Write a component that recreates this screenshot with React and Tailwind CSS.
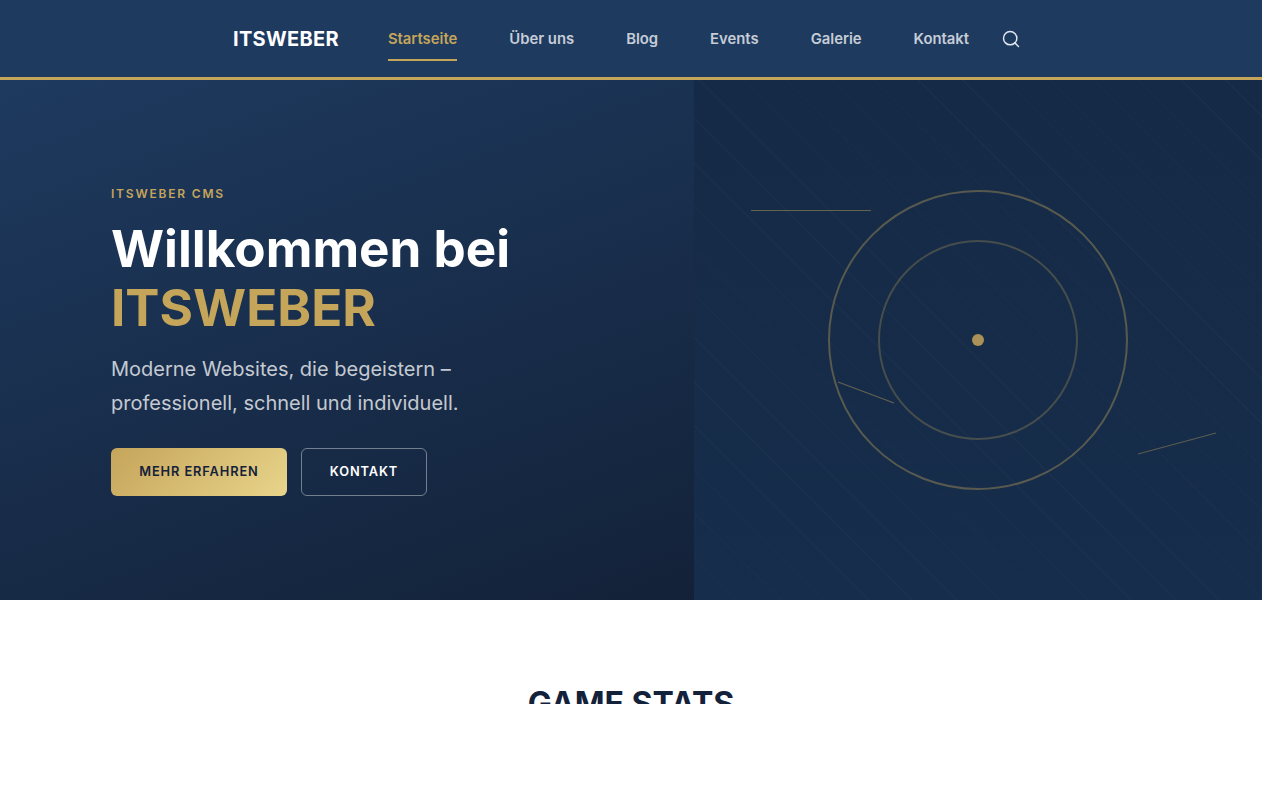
import React from 'react';
import { Search } from 'lucide-react';

const links = ['Startseite', 'Über uns', 'Blog', 'Events', 'Galerie', 'Kontakt'];

function Header() {
  return (
    <header className="h-20 bg-[#1e3a5f] border-b-[3px] border-[#c5a55a] flex items-center pl-[233px]">
      <a className="text-[20px] font-bold text-white tracking-[0.3px] mr-[49px]">ITSWEBER</a>
      <nav className="flex items-center gap-[52px] h-full">
        {links.map((link, i) => (
          <a
            key={link}
            className={`relative top-px text-[14.84px] font-semibold ${i === 0 ? 'text-[#c5a55a]' : 'text-white/75'}`}
          >
            {link}
            {i === 0 && <span className="absolute left-0 right-0 -bottom-[10px] h-0.5 bg-[#c5a55a]" />}
          </a>
        ))}
      </nav>
      <Search className="ml-[32px] text-[#e2e8f0]" size={20} strokeWidth={1.75} />
    </header>
  );
}

function HeroGraphic() {
  return (
    <div className="relative w-[45%] bg-[repeating-linear-gradient(45deg,transparent,transparent_30px,rgba(255,255,255,0.02)_30px,rgba(255,255,255,0.02)_31px),linear-gradient(180deg,#152a46,#162d4b)]">
      <svg className="absolute inset-0" width="568" height="520" viewBox="694 80 568 520" fill="none">
        <circle cx="978" cy="340" r="149" stroke="#c5a55a" strokeOpacity="0.38" strokeWidth="2" />
        <circle cx="978" cy="340" r="99" stroke="#c5a55a" strokeOpacity="0.28" strokeWidth="2" />
        <circle cx="978" cy="340" r="6" fill="#ab9158" />
        <line x1="751" y1="210.5" x2="871" y2="210.5" stroke="#c5a55a" strokeOpacity="0.45" />
        <line x1="838" y1="382" x2="894" y2="403" stroke="#c5a55a" strokeOpacity="0.45" strokeWidth="1.1" />
        <line x1="1138" y1="454" x2="1216" y2="433" stroke="#c5a55a" strokeOpacity="0.4" strokeWidth="1.1" />
      </svg>
    </div>
  );
}

function Hero() {
  return (
    <section className="flex h-[520px] bg-[linear-gradient(160deg,#1e3a5f_0%,#101b2e_100%)]">
      <div className="w-[55%] pl-[111px] pt-[106px]">
        <p className="text-[12px] leading-4 font-semibold uppercase tracking-[1.8px] text-[#c5a55a]">ITSWEBER CMS</p>
        <h1 className="mt-[17px] text-[51.2px] leading-[59px] font-bold text-white">
          Willkommen bei
          <br />
          <span className="text-[#c5a55a]">ITSWEBER</span>
        </h1>
        <p className="mt-[15px] text-[20px] leading-[34px] text-white/75">
          Moderne Websites, die begeistern –
          <br />
          professionell, schnell und individuell.
        </p>
        <div className="mt-7 flex gap-[14px]">
          <a className="w-[176px] h-12 flex items-center justify-center rounded-md bg-[linear-gradient(135deg,#c5a55a,#e8d48b)] text-[12.8px] font-semibold tracking-[0.9px] text-[#14213a]">
            MEHR ERFAHREN
          </a>
          <a className="w-[126px] h-12 flex items-center justify-center rounded-md border border-white/40 text-[12.8px] font-semibold tracking-[0.9px] text-white">
            KONTAKT
          </a>
        </div>
      </div>
      <HeroGraphic />
    </section>
  );
}

export default function App() {
  return (
    <div className="w-[1262px] min-h-[800px] bg-white font-['Inter',sans-serif]">
      <Header />
      <Hero />
      <section className="h-[104px] overflow-hidden pt-[84px] text-center">
        <h2 className="text-[32px] leading-10 font-bold text-[#14213a]">GAME STATS</h2>
      </section>
    </div>
  );
}
